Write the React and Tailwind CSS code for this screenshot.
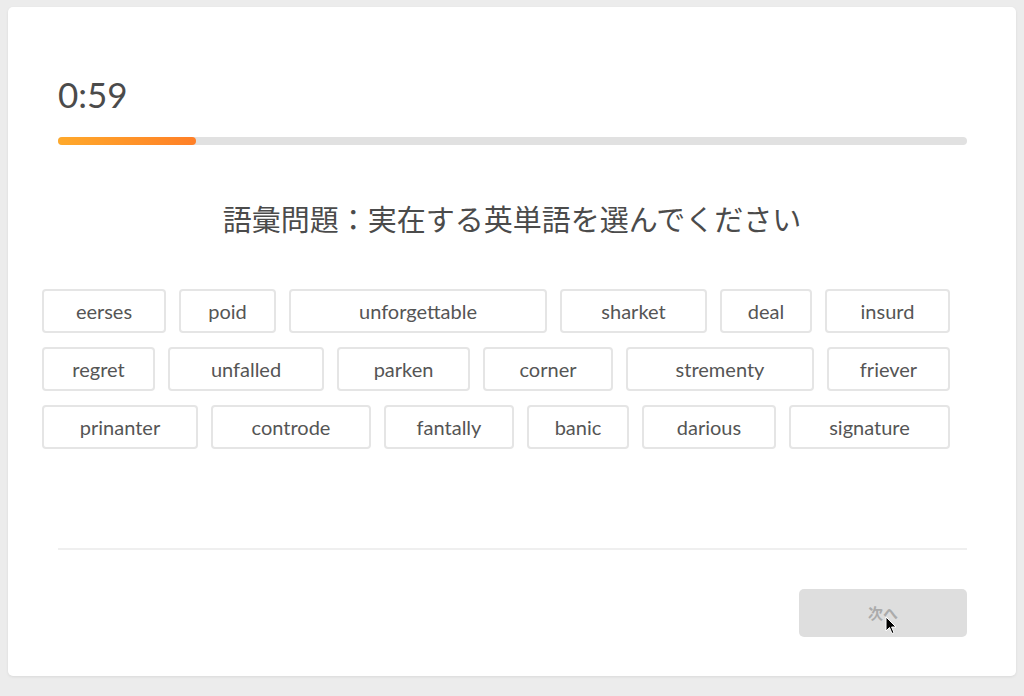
import React from "react";

const rows = [
  [["eerses", "w-[124px]"], ["poid", "w-[97px]"], ["unforgettable", "w-[258px]"], ["sharket", "w-[147px]"], ["deal", "w-[92px]"], ["insurd", "w-[125px]"]],
  [["regret", "w-[113px]"], ["unfalled", "w-[156px]"], ["parken", "w-[133px]"], ["corner", "w-[130px]"], ["strementy", "w-[188px]"], ["friever", "w-[123px]"]],
  [["prinanter", "w-[156px]"], ["controde", "w-[160px]"], ["fantally", "w-[130px]"], ["banic", "w-[102px]"], ["darious", "w-[134px]"], ["signature", "w-[161px]"]],
];

export default function App() {
  return (
    <div
      className="h-[696px] w-[1024px] bg-[#ececec] pt-[7px] pl-[8px]"
      style={{ fontFamily: 'Lato, "Noto Sans CJK JP", sans-serif' }}
    >
      <div className="relative flex h-[669px] w-[1008px] flex-col rounded-[5px] bg-white shadow-[0_1px_3px_rgba(0,0,0,0.08)]">
        <div className="px-[50px] pt-[67px]">
          <div className="text-[35px] leading-[40px] text-[#4b4b4b]">0:59</div>
          <div className="mt-[23px] h-[8px] w-[909px] rounded-full bg-[#e1e1e1]">
            <div className="h-[8px] w-[138px] rounded-full bg-gradient-to-r from-[#ffa92b] to-[#ff7f27]" />
          </div>
        </div>
        <div
          className="mt-[53px] text-center text-[29px] leading-[40px] text-[#4b4b4b]"
          style={{ fontFamily: '"Noto Sans CJK JP", sans-serif' }}
        >
          語彙問題：実在する英単語を選んでください
        </div>
        <div className="mt-[51px] flex flex-col gap-[14px] pl-[34px]">
          {rows.map((row, i) => (
            <div key={i} className="flex gap-[13px]">
              {row.map(([w, cls]) => (
                <div
                  key={w}
                  className={`${cls} flex h-[44px] items-center justify-center rounded-[4px] border-2 border-[#e5e5e5] text-[20px] text-[#555555]`}
                >
                  {w}
                </div>
              ))}
            </div>
          ))}
        </div>
        <div className="mx-[50px] mt-[99px] h-[2px] w-[909px] bg-[#efefef]" />
        <div className="mt-[39px] flex justify-end pr-[49px]">
          <div
            className="relative flex h-[48px] w-[168px] items-center justify-center rounded-[5px] bg-[#dedede] text-[15px] font-bold text-[#ababab]"
            style={{ fontFamily: '"Noto Sans CJK JP", sans-serif' }}
          >
            次へ
            <svg
              className="absolute left-[86px] top-[27px]"
              width="12"
              height="19"
              viewBox="0 0 12 19"
            >
              <path d="M1 1 L1 15 L4.5 11.5 L7 17.5 L9 16.6 L6.6 11 L11 11 Z" fill="#000" stroke="#fff" strokeWidth="1" />
            </svg>
          </div>
        </div>
      </div>
    </div>
  );
}
